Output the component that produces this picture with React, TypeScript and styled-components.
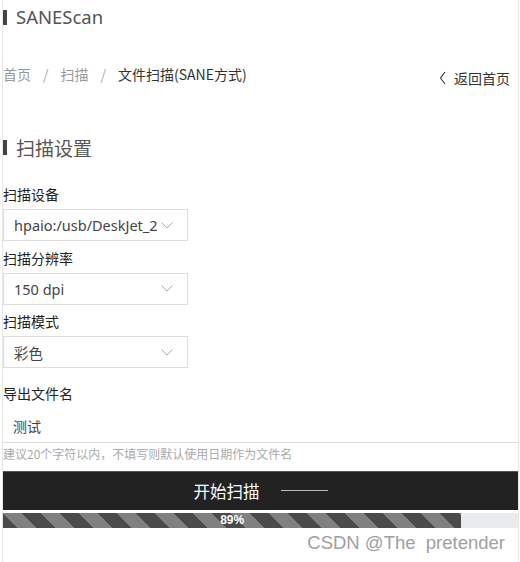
import styled, { createGlobalStyle } from 'styled-components';

const GlobalStyle = createGlobalStyle`
	html, body {
		margin: 0;
		padding: 0;
		background: #fff;
	}
	body {
		font-family: "Noto Sans", "Noto Sans CJK SC", sans-serif;
		color: #333;
	}
`;

const Page = styled.div`
	box-sizing: border-box;
	width: 517px;
	height: 562px;
	margin-left: 2px;
	border-left: 1px solid #e6e6e6;
	border-right: 1px solid #e6e6e6;
	position: relative;
	overflow: hidden;
`;

const Title = styled.h1<{ $size: number; $cjk?: boolean }>`
	margin: 0;
	display: flex;
	align-items: center;
	gap: 9px;
	font-family: ${(p) =>
		p.$cjk ? '"Noto Sans CJK SC", sans-serif' : '"Noto Sans", sans-serif'};
	font-size: ${(p) => p.$size}px;
	font-weight: 400;
	color: #555;
	line-height: 1;
	&::before {
		content: '';
		width: 4px;
		height: ${(p) => p.$size - 4}px;
		background: #444;
	}
`;

const Header = styled.header`
	padding-top: 8px;
	height: 54px;
	box-sizing: border-box;
`;

const Crumbs = styled.nav`
	display: flex;
	justify-content: space-between;
	align-items: flex-start;
	font-size: 14px;
	font-family: "Noto Sans CJK SC", sans-serif;
	height: 78px;
	padding-top: 10px;
	box-sizing: border-box;
`;

const CrumbList = styled.div`
	display: flex;
`;

const Crumb = styled.span<{ $active?: boolean }>`
	color: ${(p) => (p.$active ? '#333' : '#999')};
`;

const Sep = styled.span`
	color: #aaa;
	margin: 0 12px;
`;

const Back = styled.a`
	margin-top: 4px;
	margin-right: 8px;
	color: #333;
	display: flex;
	align-items: center;
	gap: 7px;
	text-decoration: none;
`;

const Section = styled.section`
	padding-top: 6px;
`;

const Form = styled.div`
	margin-top: 27px;
	display: flex;
	flex-direction: column;
`;

const Label = styled.div<{ $gap?: number }>`
	font-family: "Noto Sans CJK SC", sans-serif;
	font-size: 14px;
	color: #222;
	line-height: 20px;
	margin-top: ${(p) => p.$gap ?? 0}px;
	margin-bottom: 5px;
`;

const SelectBox = styled.div`
	box-sizing: border-box;
	width: 185px;
	height: 32px;
	border: 1px solid #ddd;
	display: flex;
	align-items: center;
	justify-content: space-between;
	padding: 0 14px 0 10px;
	font-size: 14.5px;
	font-family: "Noto Sans", "Noto Sans CJK SC", sans-serif;
	color: #444;
	margin-bottom: 6.5px;
	white-space: nowrap;
	overflow: hidden;
`;

const InputRow = styled.div`
	border-bottom: 1px solid #ddd;
	height: 35px;
	box-sizing: border-box;
	display: flex;
	align-items: center;
	padding: 2px 0 0 10px;
	font-family: "Noto Sans CJK SC", sans-serif;
	font-size: 14px;
	color: #444;
`;

const Hint = styled.div`
	font-family: "Noto Sans CJK SC", sans-serif;
	font-size: 12px;
	color: #aaa;
	margin-top: 2px;
	line-height: 18px;
`;

const ScanButton = styled.button`
	margin-top: 8px;
	width: 100%;
	height: 39px;
	border: none;
	border-top: 1px solid #555;
	background: #222;
	color: #fff;
	font-family: "Noto Sans CJK SC", sans-serif;
	font-size: 16.5px;
	display: flex;
	align-items: center;
	justify-content: center;
	gap: 21px;
	padding: 0;
`;

const Dash = styled.span`
	width: 47px;
	height: 1px;
	background: #bbb;
`;

const Progress = styled.div`
	margin-top: 3px;
	height: 15px;
	background: #e9ecef;
	display: flex;
`;

const Bar = styled.div`
	height: 100%;
	background-color: #808080;
	background-size: 38px 38px;
	background-image: linear-gradient(
		45deg,
		#808080 25%,
		#4a4a4a 25%,
		#4a4a4a 50%,
		#808080 50%,
		#808080 75%,
		#4a4a4a 75%
	);
	color: #fff;
	font-size: 12px;
	font-weight: 700;
	font-family: "Liberation Sans", sans-serif;
	display: flex;
	align-items: center;
	justify-content: center;
`;

const Watermark = styled.div`
	position: absolute;
	right: 13px;
	bottom: 8px;
	font-family: "Liberation Sans", sans-serif;
	font-size: 18.5px;
	color: #a0a0a0;
	white-space: pre;
`;

function Chevron({ dir = 'down' }: { dir?: 'down' | 'left' }) {
	if (dir === 'left') {
		return (
			<svg width="8" height="14" viewBox="0 0 8 14">
				<path d="M6 1 L1.5 7 L6 13" fill="none" stroke="#333" strokeWidth="1.1" />
			</svg>
		);
	}
	return (
		<svg width="12" height="7" viewBox="0 0 12 7">
			<path d="M0.5 0.5 L6 6 L11.5 0.5" fill="none" stroke="#aaa" strokeWidth="1" />
		</svg>
	);
}

export default function App() {
	const progress = 89;
	return (
		<Page>
			<GlobalStyle />
			<Header>
				<Title $size={18.5}>SANEScan</Title>
			</Header>
			<Crumbs>
				<CrumbList>
					<Crumb>首页</Crumb>
					<Sep>/</Sep>
					<Crumb>扫描</Crumb>
					<Sep>/</Sep>
					<Crumb $active>文件扫描(SANE方式)</Crumb>
				</CrumbList>
				<Back href="#">
					<Chevron dir="left" />
					返回首页
				</Back>
			</Crumbs>
			<Section>
				<Title $size={19} $cjk>
					扫描设置
				</Title>
				<Form>
					<Label>扫描设备</Label>
					<SelectBox>
						hpaio:/usb/DeskJet_2
						<Chevron />
					</SelectBox>
					<Label>扫描分辨率</Label>
					<SelectBox>
						150 dpi
						<Chevron />
					</SelectBox>
					<Label>扫描模式</Label>
					<SelectBox>
						彩色
						<Chevron />
					</SelectBox>
					<Label $gap={8}>导出文件名</Label>
					<InputRow>测试</InputRow>
					<Hint>建议20个字符以内，不填写则默认使用日期作为文件名</Hint>
					<ScanButton>
						开始扫描
						<Dash />
					</ScanButton>
					<Progress>
						<Bar style={{ width: `${progress}%` }}>{progress}%</Bar>
					</Progress>
				</Form>
			</Section>
			<Watermark>CSDN @The  pretender</Watermark>
		</Page>
	);
}
